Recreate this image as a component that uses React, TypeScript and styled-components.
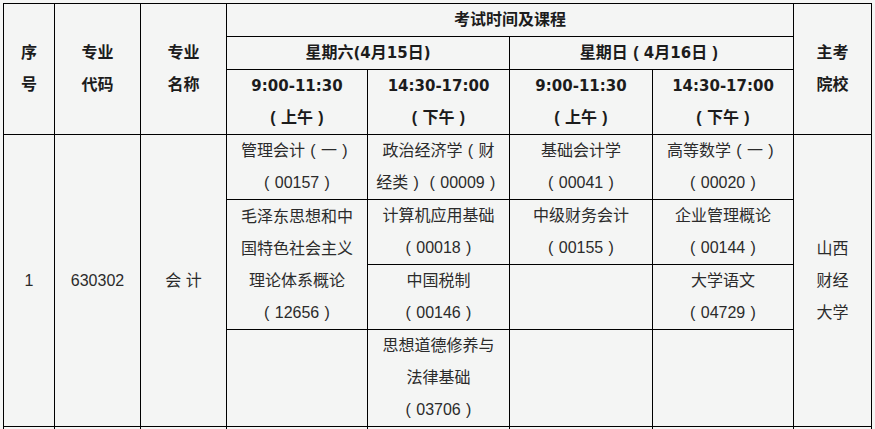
import React from 'react'
import styled, { createGlobalStyle } from 'styled-components'

const GlobalStyle = createGlobalStyle`
  html, body {
    margin: 0;
    padding: 0;
    overflow: hidden;
    background-color: #f4f5f4;
  }
  body {
    font-family: 'Liberation Sans', 'Noto Sans CJK SC', sans-serif;
    color: #333;
  }
`

const Wrapper = styled.div`
  padding: 3px 0 0 3px;
`

const Table = styled.table`
  border-collapse: collapse;
  table-layout: fixed;
  width: 869px;
  font-size: 16px;
`

const Cell = styled.td<{ head?: boolean }>`
  border: 1px solid #000;
  padding: 0;
  text-align: center;
  vertical-align: middle;
  line-height: 32px;
  white-space: nowrap;
  font-weight: ${({ head }) => (head ? 'bold' : 'normal')};
  color: ${({ head }) => (head ? '#1c1c1c' : '#2b2b2b')};
`

const Num = styled.span`
  font-family: 'DejaVu Sans', 'Noto Sans CJK SC', sans-serif;
  font-size: 15px;
`

// full-width bracket with the glyph centred in its box
const Paren = styled.span`
  display: inline-block;
  width: 16px;
  text-align: center;
  font-family: 'Liberation Sans', sans-serif;
`

const colWidths = [51, 86, 86, 141, 142, 143, 141, 78]

const withParens = (text: string) =>
  text.split(/([（）])/).map((part, i) =>
    part === '（' ? (
      <Paren key={i}>(</Paren>
    ) : part === '）' ? (
      <Paren key={i}>)</Paren>
    ) : (
      part
    )
  )

const Course = ({ lines }: { lines: string[] }) => (
  <>
    {lines.map((line, i) => (
      <React.Fragment key={i}>
        {i > 0 && <br />}
        {withParens(line)}
      </React.Fragment>
    ))}
  </>
)

const Slot = ({ time, part }: { time: string; part: string }) => (
  <Cell head>
    <Num>{time}</Num>
    <br />
    {withParens(`（${part}）`)}
  </Cell>
)

export default function App() {
  return (
    <Wrapper>
      <GlobalStyle />
      <Table>
        <colgroup>
          {colWidths.map((w, i) => (
            <col key={i} style={{ width: w }} />
          ))}
        </colgroup>
        <thead>
          <tr>
            <Cell head rowSpan={3}>
              序<br />号
            </Cell>
            <Cell head rowSpan={3}>
              专业<br />代码
            </Cell>
            <Cell head rowSpan={3}>
              专业<br />名称
            </Cell>
            <Cell head colSpan={4}>
              考试时间及课程
            </Cell>
            <Cell head rowSpan={3}>
              主考<br />院校
            </Cell>
          </tr>
          <tr>
            <Cell head colSpan={2}>
              星期六<Num>(4</Num>月<Num>15</Num>日<Num>)</Num>
            </Cell>
            <Cell head colSpan={2}>
              星期日<Paren>(</Paren>
              <Num>4</Num>月<Num>16</Num>日<Paren>)</Paren>
            </Cell>
          </tr>
          <tr>
            <Slot time="9:00-11:30" part="上午" />
            <Slot time="14:30-17:00" part="下午" />
            <Slot time="9:00-11:30" part="上午" />
            <Slot time="14:30-17:00" part="下午" />
          </tr>
        </thead>
        <tbody>
          <tr>
            <Cell rowSpan={4}>1</Cell>
            <Cell rowSpan={4}>630302</Cell>
            <Cell rowSpan={4}>会 计</Cell>
            <Cell>
              <Course lines={['管理会计（一）', '（00157）']} />
            </Cell>
            <Cell>
              <Course lines={['政治经济学（财', '经类）（00009）']} />
            </Cell>
            <Cell>
              <Course lines={['基础会计学', '（00041）']} />
            </Cell>
            <Cell>
              <Course lines={['高等数学（一）', '（00020）']} />
            </Cell>
            <Cell rowSpan={4}>
              <Course lines={['山西', '财经', '大学']} />
            </Cell>
          </tr>
          <tr>
            <Cell rowSpan={2}>
              <Course
                lines={['毛泽东思想和中', '国特色社会主义', '理论体系概论', '（12656）']}
              />
            </Cell>
            <Cell>
              <Course lines={['计算机应用基础', '（00018）']} />
            </Cell>
            <Cell>
              <Course lines={['中级财务会计', '（00155）']} />
            </Cell>
            <Cell>
              <Course lines={['企业管理概论', '（00144）']} />
            </Cell>
          </tr>
          <tr>
            <Cell>
              <Course lines={['中国税制', '（00146）']} />
            </Cell>
            <Cell />
            <Cell>
              <Course lines={['大学语文', '（04729）']} />
            </Cell>
          </tr>
          <tr>
            <Cell />
            <Cell>
              <Course lines={['思想道德修养与', '法律基础', '（03706）']} />
            </Cell>
            <Cell />
            <Cell />
          </tr>
          <tr>
            <Cell>&nbsp;</Cell>
            <Cell />
            <Cell />
            <Cell />
            <Cell />
            <Cell />
            <Cell />
            <Cell />
          </tr>
        </tbody>
      </Table>
    </Wrapper>
  )
}
